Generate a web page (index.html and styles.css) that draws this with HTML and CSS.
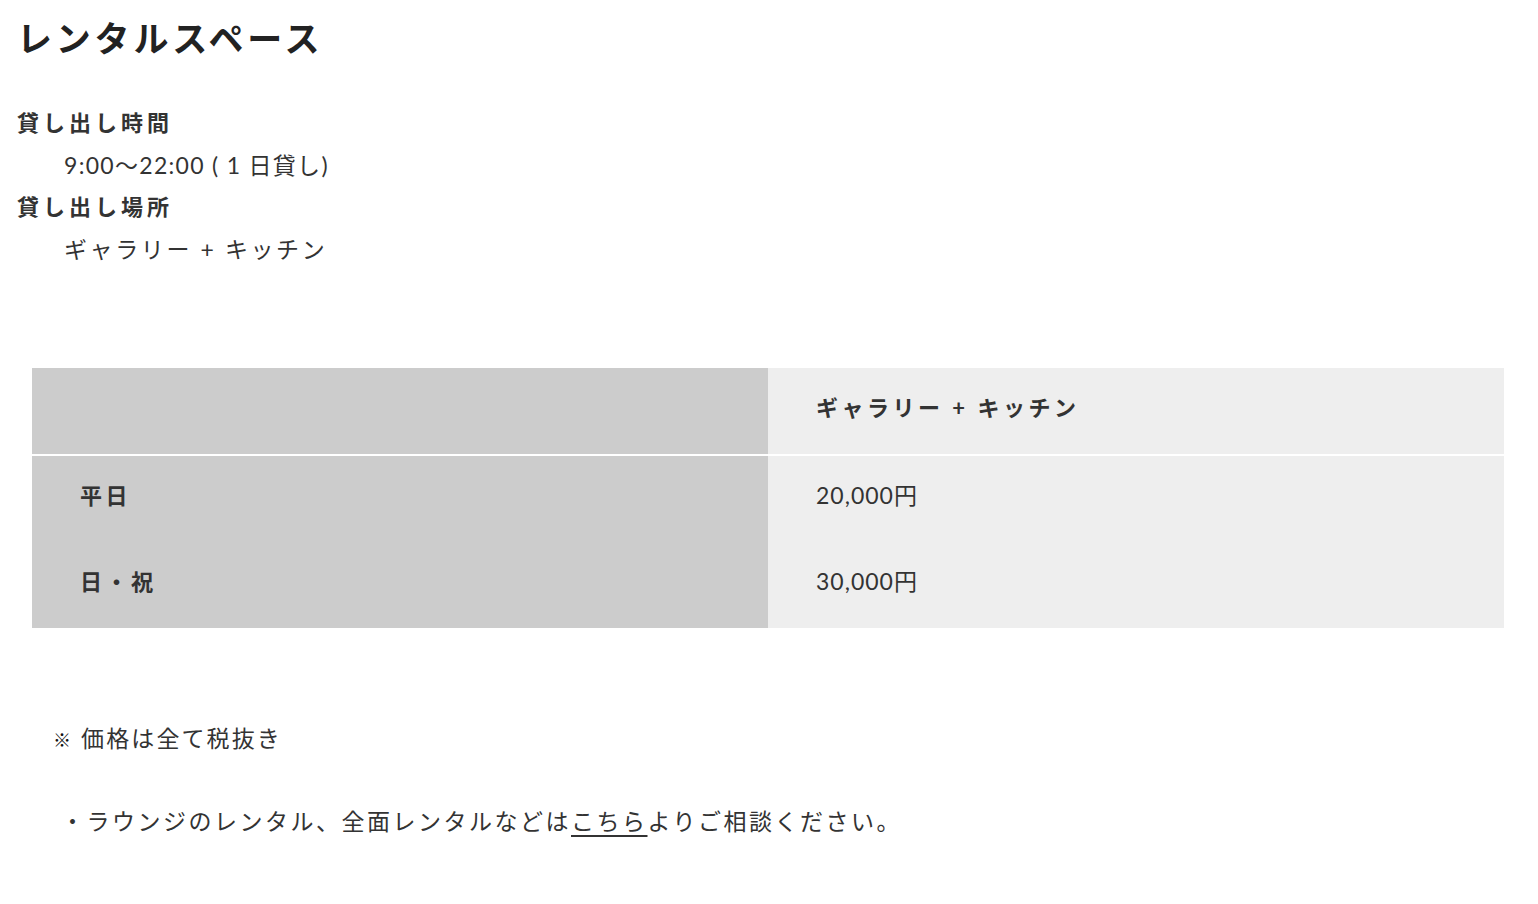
FILE: index.html
```html
<!DOCTYPE html>
<html lang="ja">
<head>
<meta charset="utf-8">
<title>レンタルスペース</title>
<link rel="stylesheet" href="styles.css">
</head>
<body>
<main class="page">
  <h1 class="title">レンタルスペース</h1>
  <dl class="info">
    <dt class="info-label">貸し出し時間</dt>
    <dd class="info-value">9:00～22:00 ( 1 日貸し)</dd>
    <dt class="info-label">貸し出し場所</dt>
    <dd class="info-value info-value--wide">ギャラリー + キッチン</dd>
  </dl>
  <table class="price">
    <thead>
      <tr class="price-head">
        <th class="col-key"></th>
        <th class="col-val">ギャラリー + キッチン</th>
      </tr>
    </thead>
    <tbody>
      <tr>
        <th class="col-key">平日</th>
        <td class="col-val">20,000円</td>
      </tr>
      <tr>
        <th class="col-key">日・祝</th>
        <td class="col-val">30,000円</td>
      </tr>
    </tbody>
  </table>
  <p class="note"><span class="mark">※</span> 価格は全て税抜き</p>
  <p class="note2">・ラウンジのレンタル、全面レンタルなどは<a class="link" href="#">こちら</a>よりご相談ください。</p>
</main>
</body>
</html>
```
FILE: styles.css
```css
html, body {
  margin: 0;
  padding: 0;
  background: #fff;
}
body {
  font-family: Lato, "Noto Sans CJK JP", sans-serif;
  color: #333;
  font-size: 23px;
}
.page {
  padding: 0 34px 0 17px;
}
.title {
  margin: 0;
  padding-top: 14px;
  font-size: 35px;
  line-height: 48px;
  letter-spacing: 3.8px;
  font-weight: 700;
  color: #222;
}
.info {
  margin: 40px 0 0;
  line-height: 42px;
}
.info-label {
  font-size: 22px;
  font-weight: 700;
  letter-spacing: 4px;
}
.info-value {
  margin-left: 47px;
  letter-spacing: 1.3px;
}
.info-value--wide {
  letter-spacing: 2.6px;
}
.price {
  margin: 98px 0 0 15px;
  width: calc(100% - 15px);
  border-collapse: collapse;
  table-layout: fixed;
}
.price th, .price td {
  height: 76px;
  padding: 0 0 10px 48px;
  text-align: left;
  vertical-align: middle;
  font-size: 22px;
}
.price .col-key {
  background: #ccc;
  font-weight: 700;
  letter-spacing: 3.5px;
}
.price .col-val {
  background: #eee;
  font-weight: 400;
  font-size: 23px;
  letter-spacing: 1px;
}
.price-head th {
  border-bottom: 2px solid #fff;
}
.price-head .col-val {
  font-size: 22px;
  font-weight: 700;
  letter-spacing: 3.5px;
}
.note {
  margin: 88px 0 0 36px;
  line-height: 44px;
  letter-spacing: 2.1px;
}
.mark {
  font-size: 18px;
  font-weight: 700;
  color: #111;
}
.note2 {
  margin: 37px 0 0 44px;
  line-height: 44px;
  letter-spacing: 2.5px;
}
.link {
  color: #333;
  text-decoration: underline;
  text-decoration-thickness: 2px;
  text-underline-offset: 5px;
}
```
